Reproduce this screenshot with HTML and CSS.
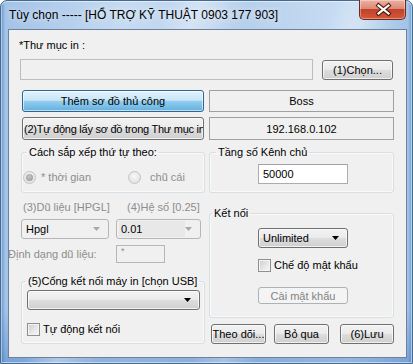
FILE: index.html
```html
<!DOCTYPE html>
<html lang="vi">
<head>
  <meta charset="UTF-8" />
  <title>Tùy chọn</title>
  <link rel="stylesheet" href="styles.css">
</head>
<body>
  <div class="window">
    <div class="titlebar">
      <span class="title">Tùy chọn ----- [HỔ TRỢ KỸ THUẬT 0903 177 903]</span>
      <button class="close" aria-label="Đóng">
        <svg width="47" height="19" viewBox="0 0 47 19">
          <path d="M18.5 5.5 L28.5 13.5 M28.5 5.5 L18.5 13.5" stroke="#4a1b12" stroke-width="4.2" stroke-linecap="square" fill="none"/>
          <path d="M18.5 5.5 L28.5 13.5 M28.5 5.5 L18.5 13.5" stroke="#ffffff" stroke-width="2.2" stroke-linecap="square" fill="none"/>
        </svg>
      </button>
    </div>

    <div class="client">
      <div class="folder-label">*Thư mục in :</div>
      <div class="folder-row">
        <div class="textbox folder-path"></div>
        <button class="btn btn-choose">(1)Chọn...</button>
      </div>

      <div class="pair-row first">
        <button class="btn btn-default">Thêm sơ đồ thủ công</button>
        <div class="static">Boss</div>
      </div>
      <div class="pair-row second">
        <button class="btn btn-clip"><span>(2)Tự động lấy sơ đồ trong Thư mục in</span></button>
        <div class="static">192.168.0.102</div>
      </div>

      <div class="columns">
        <div class="col-left">
          <fieldset class="group group-sort">
            <legend>Cách sắp xếp thứ tự theo:</legend>
            <div class="radio-row">
              <span class="radio checked"></span><span class="muted radio-text">* thời gian</span>
              <span class="radio second-radio"></span><span class="muted radio-text">chũ cái</span>
            </div>
          </fieldset>

          <div class="data-grid">
            <div class="muted data-label">(3)Dũ liệu [HPGL]</div>
            <div class="muted data-label right">(4)Hệ số [0.25]</div>
            <div class="combo disabled">
              <span class="combo-text">Hpgl</span>
              <svg class="arrow" width="7" height="4" viewBox="0 0 7 4"><path d="M0 0 H7 L3.5 4 Z" fill="#a9a9a9"/></svg>
            </div>
            <div class="combo disabled">
              <span class="combo-text shaded">0.01</span>
              <svg class="arrow" width="7" height="4" viewBox="0 0 7 4"><path d="M0 0 H7 L3.5 4 Z" fill="#a9a9a9"/></svg>
            </div>
          </div>

          <div class="format-row">
            <span class="muted format-label">Định dạng dũ liệu:</span>
            <div class="textbox format-box">*</div>
          </div>

          <fieldset class="group group-port">
            <legend>(5)Cổng kết nối máy in [chọn USB]</legend>
            <div class="combo button-combo port-combo">
              <span class="combo-text"></span>
              <svg class="arrow" width="7" height="4" viewBox="0 0 7 4"><path d="M0 0 H7 L3.5 4 Z" fill="#000"/></svg>
            </div>
            <label class="check-row port-check">
              <span class="checkbox"></span><span>Tự động kết nối</span>
            </label>
          </fieldset>
        </div>

        <div class="col-right">
          <fieldset class="group group-freq">
            <legend>Tầng số Kênh chủ</legend>
            <div class="textbox freq-box">50000</div>
          </fieldset>

          <fieldset class="group group-conn">
            <legend>Kết nối</legend>
            <div class="combo button-combo conn-combo">
              <span class="combo-text">Unlimited</span>
              <svg class="arrow" width="7" height="4" viewBox="0 0 7 4"><path d="M0 0 H7 L3.5 4 Z" fill="#000"/></svg>
            </div>
            <label class="check-row conn-check">
              <span class="checkbox"></span><span>Chế độ mật khẩu</span>
            </label>
            <button class="btn btn-disabled">Cài mật khẩu</button>
          </fieldset>

          <div class="action-row">
            <button class="btn btn-watch">Theo dõi...</button>
            <button class="btn btn-skip">Bỏ qua</button>
            <button class="btn btn-save">(6)Lưu</button>
          </div>
        </div>
      </div>
    </div>
  </div>
</body>
</html>
```

FILE: styles.css
```css
body {
  margin: 0;
  font-family: "Liberation Sans", Arial, sans-serif;
  font-size: 11px;
  color: #000;
  background: #ffffff;
}

.window {
  width: 413px;
  height: 364px;
  box-sizing: border-box;
  border: 1px solid #45698f;
  border-radius: 7px 7px 0 0;
  padding: 0 5px 5px 7px;
  display: flex;
  flex-direction: column;
  background:
    linear-gradient(112deg, rgba(255, 255, 255, 0) 30%, rgba(255, 255, 255, 0.35) 36%, rgba(255, 255, 255, 0) 44%, rgba(255, 255, 255, 0) 60%, rgba(255, 255, 255, 0.25) 66%, rgba(255, 255, 255, 0) 72%),
    linear-gradient(to bottom, rgba(255, 255, 255, 0) 85%, rgba(40, 100, 180, 0.35) 100%),
    linear-gradient(to right, #5f92cc 0, #a3c3e7 4px, #c6dbf1 30%, #b7d0ec 60%, #c9ddf2 85%, #a3c3e7 calc(100% - 4px), #6f9dd2 100%);
  box-shadow: inset 0 0 0 1px rgba(255, 255, 255, 0.5);
}

.titlebar {
  height: 28px;
  display: flex;
  align-items: flex-start;
  padding-left: 1px;
}

.title {
  padding-top: 7px;
  font-size: 12px;
  line-height: 14px;
  white-space: nowrap;
  text-shadow: 0 0 6px rgba(255, 255, 255, 0.9);
}

.close {
  margin: -1px 1px 0 auto;
  width: 47px;
  height: 20px;
  padding: 0;
  border: 1px solid #6b2a20;
  border-top: none;
  border-radius: 0 0 5px 5px;
  background: linear-gradient(to bottom, #eeb0a2 0%, #dc8a76 45%, #c3422a 50%, #d4583a 100%);
  box-shadow: inset 0 0 0 1px rgba(255, 255, 255, 0.35);
  display: block;
}

.close svg {
  display: block;
}

.client {
  flex: 1;
  background: #f0f0f0;
  border: 1px solid #6d829a;
  padding: 8px 12px 0 12px;
}

.folder-label {
  margin-left: -2px;
  line-height: 14px;
}

.textbox {
  box-sizing: border-box;
  border: 1px solid #abadb3;
  border-top-color: #a0a3aa;
  background: #ffffff;
}

.folder-row {
  display: flex;
  align-items: flex-start;
  margin-top: 7px;
}

.folder-path {
  width: 293px;
  height: 21px;
  margin-left: -1px;
  background: #f0f0f0;
  border-color: #bdbdbd;
}

.btn {
  box-sizing: border-box;
  font-family: inherit;
  font-size: 11px;
  color: #000;
  padding: 0;
  border: 1px solid #707070;
  border-radius: 3px;
  background: linear-gradient(to bottom, #f2f2f2 0%, #ebebeb 48%, #dddddd 52%, #cfcfcf 100%);
  box-shadow: inset 0 0 0 1px rgba(255, 255, 255, 0.7);
  white-space: nowrap;
}

.btn-choose {
  width: 71px;
  height: 20px;
  margin: 1px 0 0 9px;
}

.pair-row {
  display: grid;
  grid-template-columns: 182px 185px;
  column-gap: 5px;
  margin-left: 1px;
}

.pair-row.first {
  margin-top: 10px;
  height: 22px;
}

.pair-row.second {
  margin-top: 5px;
  height: 23px;
}

.btn-default {
  border-color: #2f6591;
  background: linear-gradient(to bottom, #e3f3fc 0%, #c7e6f7 46%, #93cdee 52%, #62b0e0 100%);
  box-shadow: inset 0 0 0 1px rgba(255, 255, 255, 0.6);
}

.btn-clip {
  overflow: hidden;
  text-align: left;
  padding-left: 1px;
}

.btn-clip span {
  display: block;
  width: 179px;
  overflow: hidden;
  white-space: nowrap;
  letter-spacing: -0.25px;
}

.static {
  box-sizing: border-box;
  border: 1px solid #a0a0a0;
  background: #f0f0f0;
  display: flex;
  align-items: center;
  justify-content: center;
}

.columns {
  display: grid;
  grid-template-columns: 184px 185px;
  column-gap: 4px;
  margin-top: 5px;
}

.group {
  margin: 0;
  padding: 0;
  min-width: 0;
  border: 1px solid #d5dfe5;
  border-radius: 3px;
  box-shadow: inset 0 0 0 1px rgba(255, 255, 255, 0.6);
}

.group legend {
  padding: 0 2px;
  line-height: 14px;
  white-space: nowrap;
}

.group-sort legend {
  margin-left: 5px;
}

.group-sort {
  padding: 11px 0 8px 0;
}

.radio-row {
  display: flex;
  align-items: center;
  height: 14px;
  padding-left: 1px;
}

.radio {
  box-sizing: border-box;
  width: 13px;
  height: 13px;
  border-radius: 50%;
  border: 1px solid #c3c3c3;
  background: radial-gradient(circle at 50% 40%, #f8f8f8 0, #e4e4e4 70%);
  position: relative;
}

.radio.checked::after {
  content: "";
  position: absolute;
  left: 2px;
  top: 2px;
  width: 7px;
  height: 7px;
  border-radius: 50%;
  background: radial-gradient(circle at 45% 40%, #c8c8c8 0, #9a9a9a 80%);
}

.muted {
  color: #8d8d8d;
}

.radio-text {
  margin-left: 5px;
}

.second-radio {
  margin-left: 37px;
}

.radio.second-radio + .radio-text {
  margin-left: 9px;
}

.data-grid {
  display: grid;
  grid-template-columns: 88px 85px;
  column-gap: 7px;
  row-gap: 5px;
  margin-top: 7px;
}

.data-label {
  line-height: 14px;
  padding-left: 2px;
  white-space: nowrap;
}

.data-label.right {
  padding-left: 11px;
}

.combo {
  box-sizing: border-box;
  height: 20px;
  border: 1px solid #707070;
  border-radius: 3px;
  display: flex;
  align-items: center;
  padding: 0 8px 0 4px;
}

.combo .arrow {
  margin-left: auto;
  flex-shrink: 0;
}

.combo.disabled {
  border-color: #b6b6b6;
  background: #f0f0f0;
}

.combo-text {
  white-space: nowrap;
}

.combo-text.shaded {
  background: #e8e8e8;
  margin-left: -2px;
  padding-left: 2px;
  width: 66px;
  height: 16px;
  line-height: 16px;
}

.button-combo {
  background: linear-gradient(to bottom, #f2f2f2 0%, #ebebeb 48%, #dddddd 52%, #cfcfcf 100%);
  box-shadow: inset 0 0 0 1px rgba(255, 255, 255, 0.7);
}

.format-row {
  display: flex;
  align-items: center;
  margin-top: 6px;
}

.format-label {
  width: 108px;
  margin-left: -13px;
  white-space: nowrap;
}

.format-box {
  width: 49px;
  height: 18px;
  background: #f0f0f0;
  border-color: #b6b6b6;
  color: #8d8d8d;
  font-size: 9px;
  line-height: 11px;
  padding-left: 4px;
}

.group-port {
  margin-top: 11px;
  padding: 2px 0 7px 0;
}

.group-port legend {
  margin-left: 4px;
}

.port-combo {
  width: 173px;
  margin-left: 5px;
}

.check-row {
  display: flex;
  align-items: center;
  height: 14px;
}

.checkbox {
  box-sizing: border-box;
  width: 13px;
  height: 13px;
  border: 1px solid #8e8f8f;
  background: linear-gradient(135deg, #cdcdcd 0%, #e9e9e9 60%, #f7f7f7 100%);
  box-shadow: inset 0 0 0 1px #f4f4f4;
  margin-right: 3px;
}

.port-check {
  margin: 12px 0 0 5px;
}

.group-freq {
  padding: 5px 0 8px 0;
}

.group-freq legend {
  margin-left: 6px;
}

.freq-box {
  width: 90px;
  height: 20px;
  margin-left: 48px;
  padding-left: 4px;
  line-height: 18px;
}

.group-conn {
  margin-top: 13px;
  padding: 8px 0 13px 0;
}

.group-conn legend {
  margin-left: 2px;
}

.conn-combo {
  width: 90px;
  margin-left: 48px;
}

.conn-check {
  margin: 10px 0 0 48px;
}

.btn-disabled {
  display: block;
  width: 90px;
  height: 17px;
  margin: 15px 0 0 48px;
  color: #838383;
  border-color: #adb2b5;
  background: #f4f4f4;
  box-shadow: none;
  line-height: 14px;
}

.action-row {
  display: flex;
  margin-top: 6px;
  padding-left: 2px;
}

.action-row .btn {
  height: 20px;
}

.btn-watch {
  width: 55px;
}

.btn-skip {
  width: 55px;
  margin-left: 8px;
}

.btn-save {
  width: 54px;
  margin-left: 11px;
}
```
